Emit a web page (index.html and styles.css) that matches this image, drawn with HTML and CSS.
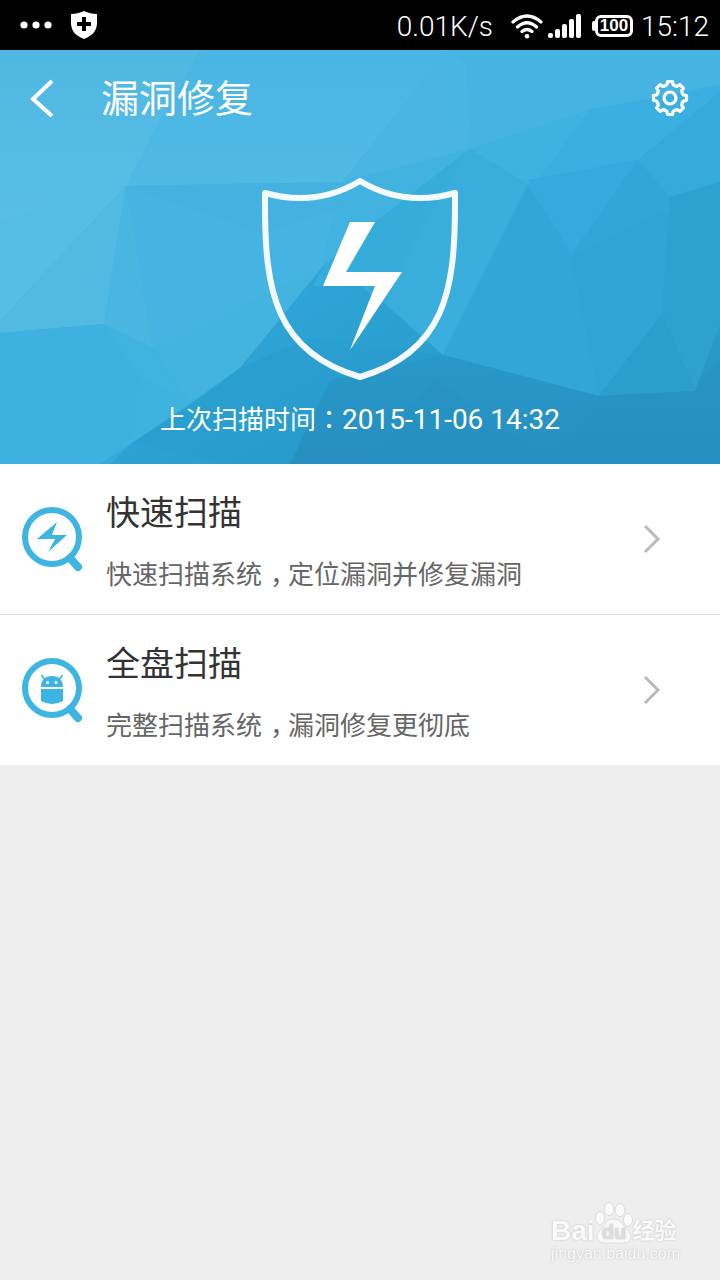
FILE: index.html
```html
<!DOCTYPE html>
<html lang="zh-CN">
<head>
    <meta charset="UTF-8">
    <meta name="viewport" content="width=device-width, initial-scale=1.0">
    <title>漏洞修复</title>
    <link rel="stylesheet" href="styles.css">
</head>
<body>
    <div class="status-bar">
        <div class="status-left">
            <svg width="32" height="8" viewBox="0 0 32 8" fill="#fff">
                <circle cx="4" cy="4" r="3.6"/><circle cx="16" cy="4" r="3.6"/><circle cx="28" cy="4" r="3.6"/>
            </svg>
            <svg width="28" height="28" viewBox="0 0 28 28">
                <path fill="#fff" d="M14 0C10 2 5 3 1 3V12C1 20 6 25 14 28C22 25 27 20 27 12V3C23 3 18 2 14 0Z"/>
                <path stroke="#000" stroke-width="4" d="M14 6V20M7 13H21"/>
            </svg>
        </div>
        <div class="status-right">
            <span class="speed">0.01K/s</span>
            <svg class="wifi" width="32" height="25" viewBox="0 0 32 25" fill="none" stroke="#fff" stroke-width="3.2" stroke-linecap="round">
                <path d="M2 8Q16 -4 30 8M6.500 13Q16 4.500 25.500 13M11 17.500Q16 13.500 21 17.500"/>
                <circle cx="16" cy="22.300" r="2.300" fill="#fff" stroke="none"/>
            </svg>
            <svg class="signal" width="34" height="24" viewBox="0 0 34 24" fill="#fff">
                <rect x="0" y="19" width="5" height="5" rx="2"/>
                <rect x="7" y="15" width="5" height="9" rx="2"/>
                <rect x="14" y="10" width="5" height="14" rx="2"/>
                <rect x="21" y="5" width="5" height="19" rx="2"/>
                <rect x="28" y="0" width="5" height="24" rx="2"/>
            </svg>
            <span class="battery">100</span>
            <span class="clock">15:12</span>
        </div>
    </div>

    <header class="hero">
        <svg class="hero-bg" viewBox="0 0 720 414" preserveAspectRatio="none">
            <defs>
                <linearGradient id="sky" x1="0" y1="0" x2="1" y2="1">
                    <stop offset="0" stop-color="#52bae3"/>
                    <stop offset="0.5" stop-color="#38aedd"/>
                    <stop offset="1" stop-color="#258fc0"/>
                </linearGradient>
                <linearGradient id="deep" x1="0" y1="0" x2="1" y2="1">
                    <stop offset="0" stop-color="#30aadb"/>
                    <stop offset="1" stop-color="#279aca"/>
                </linearGradient>
                <linearGradient id="top" x1="0" y1="0" x2="0" y2="1">
                    <stop offset="0" stop-color="#49b5e3"/>
                    <stop offset="1" stop-color="#50bae3"/>
                </linearGradient>
                <linearGradient id="left" x1="0" y1="0" x2="0" y2="1">
                    <stop offset="0" stop-color="#4fb8e1"/>
                    <stop offset="1" stop-color="#58bee6"/>
                </linearGradient>
                <linearGradient id="floor" x1="0" y1="0" x2="0" y2="1">
                    <stop offset="0" stop-color="#299bcb"/>
                    <stop offset="1" stop-color="#268fc0"/>
                </linearGradient>
            </defs>
            <rect width="720" height="414" fill="url(#sky)"/>
            <path fill="url(#left)" d="M0 0H200L160 70L126 136L0 173Z"/>
            <path fill="#56bde5" d="M126 136L0 173V271Z"/>
            <path fill="#52bae2" d="M126 136L0 271V283L104 274Z"/>
            <path fill="url(#top)" d="M200 0H447L360 110L342 132L126 136L160 70Z"/>
            <path fill="#46b4e2" d="M126 136L342 132L322 217L240 318L190 355L152 298Z"/>
            <path fill="#40b1df" d="M126 136L342 132L338 160L262 184Z" opacity="0.3"/>
            <path fill="#49b6e2" d="M126 136L104 274L152 298L143 240Z"/>
            <path fill="#3db1df" d="M0 283L104 274L152 298L190 355L132 393L100 414H0Z"/>
            <path fill="#42b3e1" opacity="0.7" d="M104 274L152 298L190 355L139 326Z"/>
            <path fill="#44b4e1" opacity="0.3" d="M0 290L100 370L70 414H20Z"/>
            <path fill="#42b3e1" opacity="0.5" d="M139 326L190 355L132 393Z"/>
            <path fill="#41b2e0" d="M152 298L322 217L240 318L190 355Z" opacity="0.7"/>
            <!-- dark lower middle -->
            <path fill="url(#deep)" d="M110 414L132 393L190 355L240 318L325 214H360L443 305L330 414Z"/>
            <path fill="#2698c9" opacity="0.3" d="M310 288L443 305L330 330L290 414H220L132 393L240 318Z"/>
            <!-- right side facets -->
            <path fill="#48b5e3" d="M447 0L360 110L342 132L470 99Z"/>
            <path fill="#45b4e2" d="M447 0L470 99L590 60L720 35V0Z"/>
            <path fill="#4eb8e3" opacity="0.4" d="M447 0L466 14L470 99Z"/>
            <path fill="#42b3e1" d="M342 132L470 99L375 172L322 217Z"/>
            <path fill="#36acdb" d="M470 99L375 172L325 214L313 236H360L385 254L443 305L528 134Z"/>
            <path fill="#3bb0df" opacity="0.5" d="M470 99L528 134L443 305L385 254L420 180Z"/>
            <path fill="#3eb2e0" d="M470 99L590 60L540 128L528 134Z"/>
            <path fill="#39b0df" d="M590 60L720 35V42L638 110L540 128Z"/>
            <path fill="#34abdc" d="M528 130L638 110L571 205Z"/>
            <path fill="#30a7d7" d="M528 134L571 205L443 305Z"/>
            <path fill="#32a6d6" d="M571 205L443 305L599 346L662 264L670 147L638 110Z"/>
            <path fill="#2da2d2" opacity="0.25" d="M571 205L668 160L662 264L599 346Z"/>
            <path fill="#34abdb" d="M638 110L720 42V132L670 147Z"/>
            <path fill="#2ea1d0" d="M670 147L720 132V275L695 341L662 264Z"/>
            <path fill="#2b9ecd" d="M662 264L695 341L599 346Z"/>
            <path fill="url(#floor)" d="M443 305L599 346L695 341L720 275V414H290L330 330Z"/>
            <path fill="#2590c0" opacity="0.4" d="M434 328L370 414H550Z"/>
            <path fill="#2590c0" opacity="0.4" d="M599 346L695 341L720 310V414H550Z"/>
        </svg>

        <nav class="app-bar">
            <button class="icon-btn" aria-label="返回">
                <svg width="24" height="40" viewBox="0 0 24 40" fill="none" stroke="#fff" stroke-width="4">
                    <path d="M22 3L3 21L22 38"/>
                </svg>
            </button>
            <h1>漏洞修复</h1>
            <button class="icon-btn" aria-label="设置">
                <svg width="38" height="38" viewBox="-19 -19 38 38" fill="none" stroke="#fff" stroke-width="3.200" stroke-linejoin="round">
                    <path d="M-3 -13.500L-2.500 -16.500H2.500L3 -13.500L5 -12.100L7.400 -11.700L9.900 -13.400L13.400 -9.900L11.700 -7.400L12.100 -5L13.500 -3L16.500 -2.500V2.500L13.500 3L12.100 5L11.700 7.400L13.400 9.900L9.900 13.400L7.400 11.700L5 12.100L3 13.500L2.500 16.500H-2.500L-3 13.500L-5 12.100L-7.400 11.700L-9.900 13.400L-13.400 9.900L-11.700 7.400L-12.100 5L-13.500 3L-16.500 2.500V-2.500L-13.500 -3L-12.100 -5L-11.700 -7.400L-13.400 -9.900L-9.900 -13.400L-7.400 -11.700L-5 -12.100Z"/>
                    <circle r="6"/>
                </svg>
            </button>
        </nav>

        <svg class="shield" width="200" height="206" viewBox="260 176 200 206">
            <path fill="none" stroke="#f4faff" stroke-width="6" stroke-linejoin="round" d="M360 181C330 199 297 202 265 193V205C265 290 275 352 360 377C445 352 455 290 455 205V193C423 202 390 199 360 181Z"/>
            <path fill="#fff" d="M350 222H375L346 272H402L350 350L375 286H323Z"/>
        </svg>

        <p class="last-scan">上次扫描时间<span class="colon" lang="zh-TW">：</span><time datetime="2015-11-06T14:32">2015-11-06 14:32</time></p>
    </header>

    <main class="scan-list">
        <a class="scan-item" href="#quick">
            <svg width="64" height="66" viewBox="20 505 64 66">
                <circle cx="52" cy="536" r="27" fill="none" stroke="#3eb4e2" stroke-width="6"/>
                <path stroke="#3eb4e2" stroke-width="8" stroke-linecap="round" d="M70 557L78 566"/>
                <path fill="#3eb4e2" d="M57 521L37 538H55L48 551L67 534H52Z"/>
            </svg>
            <div class="scan-text">
                <h2>快速扫描</h2>
                <p>快速扫描系统<span class="comma">，</span>定位漏洞并修复漏洞</p>
            </div>
            <svg width="18" height="30" viewBox="0 0 18 30" fill="none" stroke="#bbb" stroke-width="3">
                <path d="M2 2L15 15L2 28"/>
            </svg>
        </a>
        <a class="scan-item" href="#full">
            <svg width="64" height="66" viewBox="20 505 64 66">
                <circle cx="52" cy="536" r="27" fill="none" stroke="#3eb4e2" stroke-width="6"/>
                <path stroke="#3eb4e2" stroke-width="8" stroke-linecap="round" d="M70 557L78 566"/>
                <path fill="#3eb4e2" d="M41 535C41 528 45 524 52 524S63 528 63 535ZM41 537H63V549Q52 555 41 549Z"/>
                <path stroke="#3eb4e2" stroke-width="1.600" d="M41.500 523L45 528M62.500 523L59 528"/>
                <circle cx="47.500" cy="530.500" r="1.500" fill="#fff"/>
                <circle cx="56" cy="530.500" r="1.500" fill="#fff"/>
            </svg>
            <div class="scan-text">
                <h2>全盘扫描</h2>
                <p>完整扫描系统<span class="comma">，</span>漏洞修复更彻底</p>
            </div>
            <svg width="18" height="30" viewBox="0 0 18 30" fill="none" stroke="#bbb" stroke-width="3">
                <path d="M2 2L15 15L2 28"/>
            </svg>
        </a>
    </main>

    <footer class="watermark">
        <div class="brand">
            <span>Bai</span>
            <svg width="38" height="42" viewBox="0 0 38 42" fill="#fafafa" stroke="#dcdcdc">
                <ellipse cx="5" cy="16" rx="4.500" ry="6.500"/>
                <ellipse cx="14" cy="7" rx="4.800" ry="6.500"/>
                <ellipse cx="25" cy="8" rx="4.800" ry="6.500"/>
                <ellipse cx="33" cy="18" rx="4.500" ry="6.500"/>
                <path d="M18 17C25 17 26 21 31 26C36 31 37 34 35 38C33 42 26 41 19 41C12 41 5 42 3 38C1 34 2 31 7 26C12 21 11 17 18 17Z"/>
                <text x="19" y="37" class="brand-du" text-anchor="middle">du</text>
            </svg>
            <span>经验</span>
        </div>
        <div class="site">jingyan.baidu.com</div>
    </footer>
</body>
</html>
```

FILE: styles.css
```css
* {
    box-sizing: border-box;
}
body {
    margin: 0;
    min-height: 100vh;
    display: flex;
    flex-direction: column;
    background: #eee;
    font-family: Roboto, "Noto Sans CJK SC", sans-serif;
}
h1, h2, p {
    margin: 0;
    font-weight: 400;
}
svg {
    display: block;
    flex: none;
}

/* status bar */
.status-bar {
    display: flex;
    justify-content: space-between;
    align-items: center;
    height: 50px;
    padding: 0 11px 0 20px;
    background: #000;
    color: #fff;
    font-size: 28px;
    font-weight: 300;
    line-height: 32px;
}
.status-left,
.status-right {
    display: flex;
    align-items: center;
}
.status-left {
    gap: 18px;
}
.status-right {
    padding-top: 2px;
}
.speed,
.clock {
    padding-top: 2px;
}
.wifi {
    margin-left: 18px;
}
.signal {
    margin: 0 13px 0 5px;
}
.battery {
    position: relative;
    width: 38px;
    height: 22px;
    margin-right: 8px;
    border: 3px solid #fff;
    border-radius: 6px;
    font-family: "Liberation Sans", Arial, sans-serif;
    font-size: 17px;
    font-weight: 700;
    line-height: 16px;
    text-align: center;
}
.battery::before {
    content: "";
    position: absolute;
    left: -6px;
    top: 3px;
    width: 4px;
    height: 10px;
    border-radius: 2px;
    background: #fff;
}

/* header */
.hero {
    position: relative;
    display: flex;
    flex-direction: column;
    align-items: center;
    padding-bottom: 26px;
    color: #fff;
}
.hero-bg {
    position: absolute;
    inset: 0;
    z-index: -1;
    width: 100%;
    height: 100%;
}
.app-bar {
    display: flex;
    align-items: center;
    width: 100%;
    height: 96px;
    padding: 0 31px 0 30px;
}
.app-bar h1 {
    flex: 1;
    margin-left: 47px;
    padding-top: 2px;
    font-size: 38px;
    line-height: 48px;
}
.icon-btn {
    padding: 0;
    border: none;
    background: none;
    cursor: pointer;
}
.shield {
    margin: 30px 0 18px;
}
.last-scan {
    height: 38px;
    font-size: 26px;
    line-height: 36px;
}
.last-scan time {
    font-size: 28px;
}
.colon {
    font-family: "Noto Sans CJK TC", sans-serif;
}

/* scan options */
.scan-list {
    background: #fff;
}
.scan-item {
    display: flex;
    align-items: center;
    height: 150px;
    padding: 0 59px 0 20px;
    color: inherit;
    text-decoration: none;
}
.scan-item + .scan-item {
    height: 151px;
    border-top: 1px solid #ddd;
}
.scan-text {
    flex: 1;
    display: flex;
    flex-direction: column;
    gap: 16px;
    margin-left: 22px;
    padding-top: 3px;
}
.scan-text h2 {
    color: #333;
    font-size: 34px;
    line-height: 50px;
}
.scan-text p {
    color: #666;
    font-size: 26px;
    line-height: 38px;
}
/* half-width comma with even space on both sides */
.comma {
    margin: 0 5px 0 8px;
    font-family: "Noto Sans CJK SC", sans-serif;
    font-feature-settings: "halt";
}

/* watermark */
.watermark {
    align-self: flex-end;
    margin-top: auto;
    padding: 0 40px 16px 0;
    color: #fafafa;
    text-shadow: 0 0 2px #bbb;
}
.brand {
    display: flex;
    align-items: flex-end;
    font-size: 22px;
    font-weight: 700;
    line-height: 26px;
}
.brand span:first-child {
    font-family: "Liberation Sans", Arial, sans-serif;
    font-size: 28px;
}
.brand-du {
    fill: #ddd;
    stroke: none;
    font-family: "Liberation Sans", Arial, sans-serif;
    font-size: 20px;
}
.site {
    font-family: "Liberation Sans", Arial, sans-serif;
    font-size: 16px;
    line-height: 20px;
}
```
